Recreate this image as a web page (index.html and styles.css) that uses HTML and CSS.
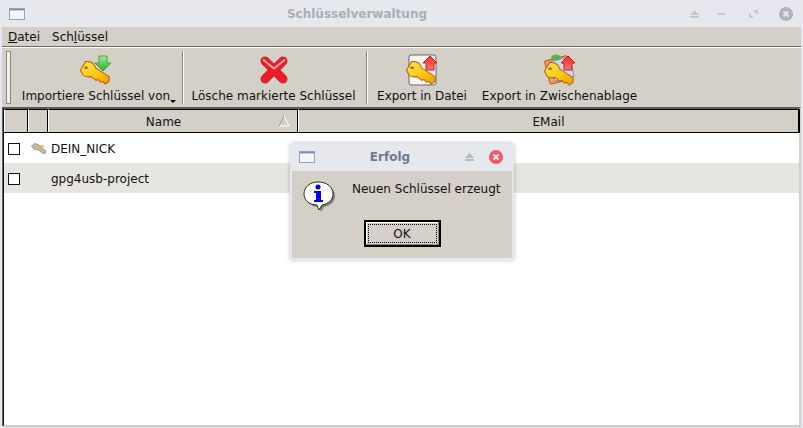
FILE: index.html
```html
<!DOCTYPE html>
<html lang="de">
<head>
  <meta charset="UTF-8">
  <title>Schlüsselverwaltung</title>
  <link rel="stylesheet" href="styles.css">
</head>
<body>
  <!-- shared icon parts -->
  <svg class="defs" width="0" height="0">
    <defs>
      <linearGradient id="gold" x1="0" y1="0" x2="1" y2="1">
        <stop offset="0" stop-color="#ffe95a"/>
        <stop offset="0.6" stop-color="#fcc40e"/>
        <stop offset="1" stop-color="#e89a08"/>
      </linearGradient>
      <linearGradient id="green" x1="0" y1="0" x2="0" y2="1">
        <stop offset="0" stop-color="#a4ee92"/>
        <stop offset="1" stop-color="#1fae2c"/>
      </linearGradient>
      <linearGradient id="red" x1="0" y1="0" x2="0" y2="1">
        <stop offset="0" stop-color="#ff2a20"/>
        <stop offset="1" stop-color="#f27a78"/>
      </linearGradient>
      <symbol id="key" viewBox="0 0 32 32">
        <path d="M0.500 15 L6 6 Q12 5 15 9 L17 13 L31 22 L31 27 L27 30 L24 27 L22 28 L19 25 L17 26 L12 22 Q6 23 3 20 Z" fill="url(#gold)" stroke="#b8620c" stroke-width="1.100" stroke-linejoin="round"/>
        <ellipse cx="6.500" cy="12.500" rx="2" ry="1.400" fill="#a8660c"/>
      </symbol>
      <symbol id="up-arrow" viewBox="0 0 16 16">
        <path d="M8 1 L15 8 L12 8 L12 15 L4 15 L4 8 L1 8 Z" fill="url(#red)" stroke="#d01810" stroke-width="1"/>
      </symbol>
    </defs>
  </svg>

  <div class="window">
    <header class="titlebar">
      <svg class="win-icon" viewBox="0 0 16 12"><rect x="0.5" y="0.5" width="15" height="11" fill="#f4f5f8" stroke="#9aa2ae"/><rect x="1" y="1" width="14" height="1.4" fill="#6f8fc0"/></svg>
      <span class="title">Schlüsselverwaltung</span>
      <div class="win-buttons">
        <svg class="btn-shade" viewBox="0 0 9 8"><path d="M4.5 0 L9 5 L0 5 Z M0 6 H9 V8 H0 Z" fill="#c3c8d6"/></svg>
        <svg class="btn-min" viewBox="0 0 9 8"><rect x="1" y="3" width="7" height="2" fill="#c3c8d6"/></svg>
        <svg class="btn-max" viewBox="0 0 9 8"><path d="M4 0 H9 V5 Z M0 3 L5 8 H0 Z" fill="#c3c8d6"/></svg>
        <svg class="btn-close" viewBox="0 0 14 14"><circle cx="7" cy="7" r="7" fill="#b2b4bd"/><path d="M4.5 4.5 L9.5 9.5 M9.5 4.5 L4.5 9.5" stroke="#e8e9ee" stroke-width="2"/></svg>
      </div>
    </header>

    <nav class="menubar">
      <span><u>D</u>atei</span>
      <span>Sch<u>l</u>üssel</span>
    </nav>

    <div class="toolbar">
      <div class="handle"></div>
      <button class="tool tool-import">
        <svg class="tool-icon" viewBox="0 0 32 32">
          <use href="#key" x="0" y="2" width="30" height="30"/>
          <path d="M19 2 H27 V9 H31 L23 17 L15 9 H19 Z" fill="url(#green)" stroke="#2a9a30" stroke-width="0.8"/>
        </svg>
        <span>Importiere Schlüssel von</span><i class="drop"></i>
      </button>
      <div class="sep"></div>
      <button class="tool tool-delete">
        <svg class="tool-icon" viewBox="0 0 32 32">
          <path d="M7 7 L25 25 M25 7 L7 25" fill="none" stroke="#c02a34" stroke-width="9" stroke-linecap="round"/>
          <path d="M7 7 L25 25 M25 7 L7 25" fill="none" stroke="#f01c24" stroke-width="7" stroke-linecap="round"/>
          <path d="M5.500 6 L16 14.500 L26.500 6" fill="none" stroke="#f9a8ae" stroke-width="1.800" stroke-linecap="round"/>
        </svg>
        <span>Lösche markierte Schlüssel</span>
      </button>
      <div class="sep"></div>
      <button class="tool tool-file">
        <svg class="tool-icon" viewBox="0 0 32 32">
          <rect x="3" y="1" width="27" height="30" rx="2" fill="#f6f6f6" stroke="#666"/>
          <use href="#key" x="0" y="2" width="30" height="30"/>
          <svg x="16" y="1" width="16" height="16" viewBox="0 0 16 16"><use href="#up-arrow" width="16" height="16"/></svg>
        </svg>
        <span>Export in Datei</span>
      </button>
      <button class="tool tool-clip">
        <svg class="tool-icon" viewBox="0 0 32 32">
          <rect x="3" y="4" width="23" height="24" rx="2" transform="rotate(-14 14 16)" fill="#f0a060" stroke="#c8501c"/>
          <rect x="8" y="5" width="20" height="20" transform="rotate(-14 18 15)" fill="#c8d8f4" stroke="#8a90b0"/>
          <ellipse cx="12" cy="3.500" rx="4.500" ry="2.500" fill="#3cc048" stroke="#a08838" stroke-width="0.6"/>
          <use href="#key" x="0" y="3" width="30" height="30"/>
          <svg x="16" y="1" width="16" height="16" viewBox="0 0 16 16"><use href="#up-arrow" width="16" height="16"/></svg>
        </svg>
        <span>Export in Zwischenablage</span>
      </button>
    </div>

    <div class="table">
      <div class="thead">
        <div class="th"></div>
        <div class="th"></div>
        <div class="th th-name">Name
          <svg class="sort" viewBox="0 0 12 12"><path d="M6 1 L11 11 H1 Z" fill="none" stroke="#fff"/><path d="M6 1 L1 11" fill="none" stroke="#8c8880"/></svg>
        </div>
        <div class="th">EMail</div>
      </div>
      <div class="row">
        <span class="check"></span>
        <svg class="row-key" viewBox="0 0 15 11">
          <path d="M0.500 3 L4 0.500 L7 1.500 L8.500 3.500 L14.500 7.500 V10 L12 10.500 L7.500 7 L3.500 6.500 Z" fill="#bdbab2" stroke="#8e8b83" stroke-width="0.800" stroke-linejoin="round"/>
          <path d="M5 2.500 H12 L14 4 H8 Z" fill="#e6a632"/>
        </svg>
        <span>DEIN_NICK</span>
      </div>
      <div class="row row-alt">
        <span class="check"></span>
        <span class="row-gap"></span>
        <span>gpg4usb-project</span>
      </div>
    </div>
  </div>

  <!-- message box -->
  <div class="dialog">
    <header class="dialog-title">
      <svg class="win-icon" viewBox="0 0 16 12"><rect x="0.5" y="0.5" width="15" height="11" fill="#f4f5f8" stroke="#9aa2ae"/><rect x="1" y="1" width="14" height="1.4" fill="#6f8fc0"/></svg>
      <span class="dialog-name">Erfolg</span>
      <svg class="dialog-shade" viewBox="0 0 9 8"><path d="M4.5 0 L9 5 L0 5 Z M0 6 H9 V8 H0 Z" fill="#b4b9c6"/></svg>
      <svg class="dialog-close" viewBox="0 0 14 14"><circle cx="7" cy="7" r="7" fill="#ef5a68"/><path d="M4.5 4.5 L9.500 9.500 M9.500 4.500 L4.500 9.500" stroke="#f8e8ea" stroke-width="2"/></svg>
    </header>
    <div class="dialog-body">
      <div class="dialog-msg">
        <svg class="info" viewBox="0 0 32 32">
          <path d="M16 3 C25 3 32 8 32 15 C32 21 27 25 21 26 L18 31 L16 26 C8 26 3 21 3 15 C3 8 8 3 16 3 Z" fill="#85827c"/>
          <path d="M15 1 C24 1 30 6 30 13 C30 19 25 23 19 24 L16 29 L14 24 C6 24 1 19 1 13 C1 6 7 1 15 1 Z" fill="#fff" stroke="#000" stroke-width="0.8"/>
          <circle cx="15" cy="6" r="2.500" fill="#0000f0"/>
          <path d="M11 10 H18 V19 H20 V21 H11 V19 H13 V12 H11 Z" fill="#0000f0"/>
        </svg>
        <span>Neuen Schlüssel erzeugt</span>
      </div>
      <button class="ok"><span>OK</span></button>
    </div>
  </div>
</body>
</html>
```

FILE: styles.css
```css
html, body {
  height: 100%;
  margin: 0;
  padding: 0;
}
body {
  background: #e6e8ed;
  width: 803px;
  height: 428px;
  overflow: hidden;
  position: relative;
  font-family: "DejaVu Sans", sans-serif;
  font-size: 12px;
  color: #111;
}
.defs {
  position: absolute;
}
.window {
  height: 100%;
  display: flex;
  flex-direction: column;
  box-sizing: border-box;
  padding: 0 2px 2px 2px;
}
.titlebar {
  height: 27px;
  flex: none;
  display: flex;
  align-items: center;
  position: relative;
  margin: 0 -2px;
  padding: 0 10px 0 9px;
}
.win-icon {
  width: 16px;
  height: 12px;
}
.title {
  position: absolute;
  left: 0;
  right: 89px;
  text-align: center;
  font-weight: bold;
  font-size: 12px;
  color: #a9aeb9;
}
.win-buttons {
  margin-left: auto;
  display: flex;
  align-items: center;
}
.win-buttons svg {
  width: 9px;
  height: 8px;
}
.win-buttons .btn-min { margin-left: 18px; }
.win-buttons .btn-max { margin-left: 23px; }
.win-buttons .btn-close {
  width: 14px;
  height: 14px;
  margin-left: 21px;
}
.menubar {
  height: 19px;
  flex: none;
  display: flex;
  align-items: center;
  gap: 12px;
  padding-left: 6px;
  background: #d4d0c8;
  border-bottom: 1px solid #6f6c66;
}
.toolbar {
  height: 59px;
  flex: none;
  display: flex;
  align-items: stretch;
  background: #d4d0c8;
  border-top: 1px solid #fff;
}
.handle {
  width: 3px;
  margin: 3px 0 3px 4px;
  background: #f2f1ee;
  border: 1px solid #8c8880;
}
.sep {
  width: 1px;
  margin: 3px 0;
  background: #8c8880;
  box-shadow: 1px 0 0 #fff;
}
.tool {
  border: none;
  background: none;
  font: inherit;
  color: inherit;
  padding: 0;
  display: flex;
  flex-direction: column;
  align-items: center;
  justify-content: flex-end;
  position: relative;
}
.tool span {
  line-height: 15px;
  margin-bottom: 3px;
  white-space: nowrap;
}
.tool-icon {
  width: 32px;
  height: 32px;
  margin-bottom: 3px;
}
.tool-import { width: 170px; margin-left: 1px; padding-right: 2px; box-sizing: border-box; }
.tool-delete { width: 182px; margin-left: 1px; padding-right: 3px; box-sizing: border-box; }
.tool-file { width: 108px; margin-left: 1px; }
.tool-clip { width: 155px; margin-left: 6px; }
.drop {
  position: absolute;
  right: 6px;
  bottom: 4px;
  width: 0;
  height: 0;
  border: 3px solid transparent;
  border-top-color: #000;
  border-bottom: none;
}
.table {
  flex: 1;
  margin-left: 1px;
  background: #fff;
  border-left: 1px solid #111;
  border-top: 2px solid #5c5a55;
  border-bottom: 1px solid #d4d0c8;
  border-right: 2px solid #d4d0c8;
  box-shadow: 0 1px 0 #c8c8c8, -1px 0 0 #666;
}
.thead {
  display: grid;
  grid-template-columns: 24px 20px 250px 1fr;
  height: 24px;
  box-sizing: border-box;
  margin-right: -1px;
  background: #000;
  border: solid #000;
  border-width: 0 1px 1px 0;
}
.th {
  background: #d4d0c8;
  border-left: 1px solid #fff;
  border-right: 1px solid #000;
  border-top: 1px solid #000;
  padding-top: 1px;
  display: flex;
  align-items: center;
  justify-content: center;
  position: relative;
}
.th-name {
  padding-right: 19px;
}
.sort {
  position: absolute;
  right: 7px;
  top: 5px;
  width: 12px;
  height: 12px;
}
.row {
  height: 30px;
  box-sizing: border-box;
  padding: 1px 0 0 4px;
  display: flex;
  align-items: center;
  color: #111;
}
.row-alt {
  background: #e7e5e0;
}
.check {
  width: 10px;
  height: 10px;
  border: 1px solid #111;
  background: #fff;
  flex: none;
}
.row-key {
  width: 15px;
  height: 11px;
  margin: 0 5px 0 11px;
}
.row-gap {
  width: 31px;
  flex: none;
}
.dialog {
  position: absolute;
  left: 290px;
  top: 143px;
  width: 224px;
  height: 117px;
  box-sizing: border-box;
  background: #e6e8ed;
  padding: 0 2px 2px;
  display: flex;
  flex-direction: column;
  border-radius: 4px 4px 0 0;
  box-shadow: 0 0 4px rgba(0, 0, 0, .25);
}
.dialog-title {
  height: 28px;
  flex: none;
  display: flex;
  align-items: center;
  position: relative;
  padding-left: 7px;
}
.dialog-name {
  position: absolute;
  left: 0;
  right: 24px;
  text-align: center;
  font-weight: bold;
  color: #6f7a90;
}
.dialog-shade {
  width: 9px;
  height: 8px;
  margin-left: auto;
}
.dialog-close {
  width: 14px;
  height: 14px;
  margin: 0 9px 0 15px;
}
.dialog-body {
  flex: 1;
  background: #d4d0c8;
  display: flex;
  flex-direction: column;
  align-items: center;
}
.dialog-msg {
  align-self: stretch;
  display: flex;
  align-items: flex-start;
  padding: 10px 0 0 11px;
  height: 39px;
}
.dialog-msg span {
  margin: 1px 0 0 17px;
  white-space: nowrap;
}
.info {
  width: 32px;
  height: 32px;
  flex: none;
}
.ok {
  width: 77px;
  height: 27px;
  padding: 0;
  background: #d4d0c8;
  border: 2px solid #000;
  box-shadow: inset -1px -1px 0 #8c8880, inset 1px 1px 0 #fff;
  font: inherit;
  color: inherit;
  display: flex;
}
.ok span {
  flex: 1;
  margin: 2px;
  border: 1px dotted #000;
  display: flex;
  align-items: center;
  justify-content: center;
}
```
